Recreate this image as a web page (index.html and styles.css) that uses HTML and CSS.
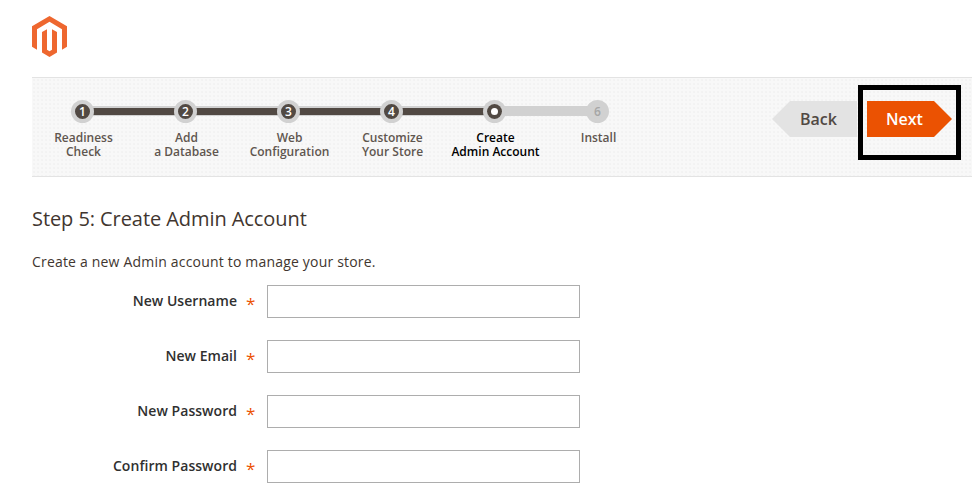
FILE: index.html
```html
<!DOCTYPE html>
<html lang="en">
<head>
<meta charset="utf-8">
<title>Step 5: Create Admin Account</title>
<link rel="stylesheet" href="styles.css">
</head>
<body>
<div class="page">
  <header class="logo-bar">
    <svg class="logo" viewBox="1.609 0 20.782 24" preserveAspectRatio="none" aria-hidden="true">
      <path fill="#ee672f" d="M12 24l-4.455-2.572v-12l2.97-1.715v12.001L12 20.569l1.485-.856V7.712l2.97 1.715v12.001L12 24zM22.391 6v12l-2.971 1.714V7.712L12 3.43 4.574 7.712v12.001L1.609 18V6L12 0l10.391 6z"/>
    </svg>
  </header>
  <nav class="progress">
    <ol class="steps">
      <li class="step done"><span class="dot">1</span><span class="name">Readiness<br>Check</span></li>
      <li class="step done"><span class="dot">2</span><span class="name">Add<br>a Database</span></li>
      <li class="step done"><span class="dot">3</span><span class="name">Web<br>Configuration</span></li>
      <li class="step done"><span class="dot">4</span><span class="name">Customize<br>Your Store</span></li>
      <li class="step active"><span class="dot"></span><span class="name">Create<br>Admin Account</span></li>
      <li class="step todo"><span class="dot">6</span><span class="name">Install</span></li>
    </ol>
    <div class="actions">
      <button class="btn back" type="button">Back</button>
      <button class="btn next" type="button">Next</button>
      <span class="highlight"></span>
    </div>
  </nav>
  <main class="content">
    <h1>Step 5: Create Admin Account</h1>
    <p>Create a new Admin account to manage your store.</p>
    <form class="fields">
      <div class="row"><label>New Username</label><span class="req">*</span><input type="text"></div>
      <div class="row"><label>New Email</label><span class="req">*</span><input type="text"></div>
      <div class="row"><label>New Password</label><span class="req">*</span><input type="text"></div>
      <div class="row"><label>Confirm Password</label><span class="req">*</span><input type="text"></div>
    </form>
  </main>
</div>
</body>
</html>
```
FILE: styles.css
```css
* { box-sizing: border-box; }
html, body { margin: 0; padding: 0; background: #fff; height: 497px; overflow: hidden; }
body { font-family: "Open Sans", sans-serif; color: #41362f; }
.page { padding: 0 4px 0 32px; }
.logo-bar { height: 77px; padding-top: 16px; }
.logo { display: block; width: 35px; height: 41px; }
.progress {
  display: flex;
  justify-content: space-between;
  height: 100px;
  border-top: 1px solid #e3e3e3;
  border-bottom: 1px solid #e3e3e3;
  background-color: #f8f8f8;
  background-image: radial-gradient(#f2f2f2 0.7px, transparent 0.8px);
  background-size: 4px 4px;
}
.steps { display: flex; list-style: none; margin: 0 0 0 -1px; padding: 0; }
.step { position: relative; width: 103px; padding-top: 22px; display: flex; flex-direction: column; align-items: center; }
.step::before {
  content: "";
  position: absolute;
  left: 51px;
  width: 103px;
  top: 28px;
  height: 10px;
  background: #d1d1d1;
}
.step.done::after {
  content: "";
  position: absolute;
  left: 51px;
  width: 103px;
  top: 30px;
  height: 7px;
  background: #514943;
}
.step:last-child::before { display: none; }
.dot {
  position: relative;
  z-index: 1;
  width: 23px;
  height: 23px;
  border-radius: 50%;
  background: #514943;
  border: 4px solid #d1d1d1;
  color: #fff;
  font-size: 12px;
  font-weight: 600;
  line-height: 15px;
  text-align: center;
}
.step.active .dot { background: #fff; border: 0; box-shadow: inset 0 0 0 4px #514943, 0 0 0 4px #d1d1d1; width: 15px; height: 15px; margin: 4px 0; }
.step.todo .dot { background: #d1d1d1; color: #a6a6a6; }
.name { margin-top: 8px; padding-left: 2px; font-size: 12px; line-height: 14px; font-weight: 600; text-align: center; color: #5f564f; white-space: nowrap; }
.step.active .name { color: #000; }
.actions { position: relative; display: flex; gap: 10px; padding: 23px 20px 0 0; }
.btn {
  width: 85px;
  height: 36px;
  border: 0;
  padding: 0;
  font-family: inherit;
  font-size: 16px;
  font-weight: 600;
}
.back {
  color: #514943;
  background: #e3e3e3;
  clip-path: polygon(18px 0, 100% 0, 100% 100%, 18px 100%, 0 50%);
  padding-left: 8px;
}
.next {
  color: #fff;
  background: #eb5202;
  clip-path: polygon(0 0, 67px 0, 100% 50%, 67px 100%, 0 100%);
  padding-right: 10px;
}
.highlight {
  position: absolute;
  right: 11px;
  top: 7px;
  width: 103px;
  height: 75px;
  border: 5px solid #000;
}
.content { padding-top: 30px; }
h1 { margin: 0; font-size: 20px; line-height: 24px; font-weight: 400; letter-spacing: -0.07px; color: #41362f; }
p { margin: 21px 0 0; font-size: 14px; line-height: 19px; letter-spacing: 0.19px; color: #41362f; }
.fields { display: flex; flex-direction: column; gap: 22px; margin-top: 14px; }
.row { display: flex; align-items: center; height: 33px; }
label { width: 205px; text-align: right; font-size: 14px; font-weight: 600; letter-spacing: 0.04px; color: #303030; position: relative; bottom: 1px; }
.req { width: 30px; padding: 3px 0 0 9px; color: #eb5202; font-size: 17px; font-weight: 400; line-height: 1; }
input { width: 313px; height: 33px; border: 1px solid #adadad; background: #fff; padding: 0 8px; }
```
